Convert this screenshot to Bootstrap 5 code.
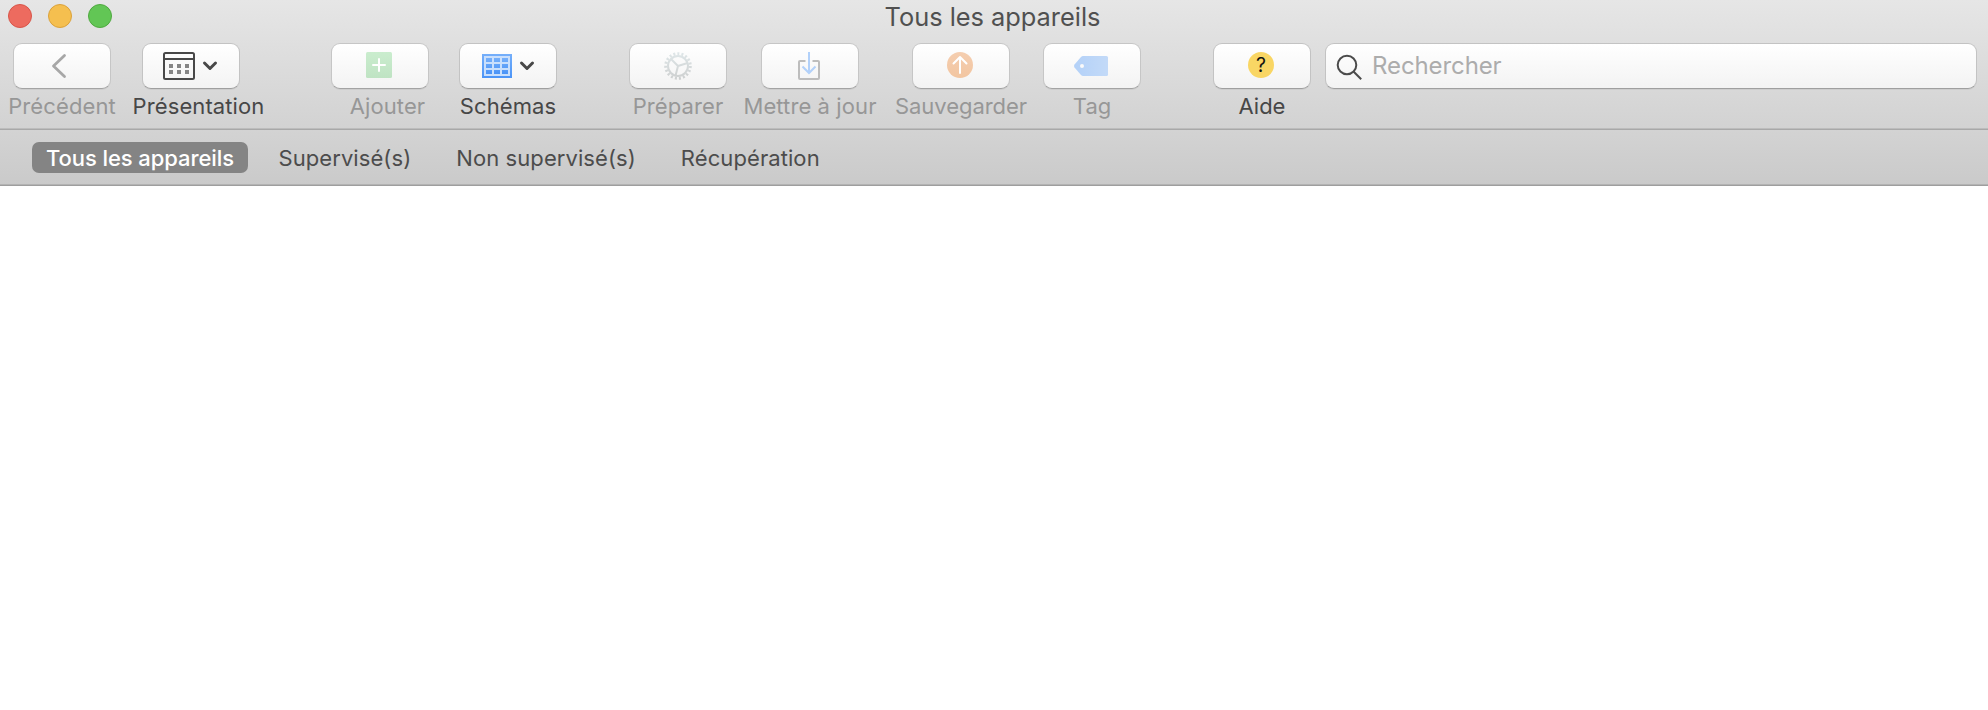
<!DOCTYPE html>
<html lang="fr">
<head>
<meta charset="utf-8">
<title>Tous les appareils</title>
<link href="https://cdn.jsdelivr.net/npm/bootstrap@5.3.0/dist/css/bootstrap.min.css" rel="stylesheet">
<script src="https://cdn.jsdelivr.net/npm/bootstrap@5.3.0/dist/js/bootstrap.bundle.min.js" defer></script>
<style>
body { font-family: Inter, "Liberation Sans", sans-serif; color: #4a4a4a; background: #fff; overflow: hidden; }
.chrome-top { height: 130px; background: linear-gradient(#e6e6e6, #d2d2d2); border-bottom: 1px solid #a8a8a8; box-shadow: inset 0 -1px #bcbcbc; }
.titlebar { height: 34px; }
.win-title { font-size: 25.4px; line-height: 34px; letter-spacing: -.02px; color: #505050; padding-right: 3px; }
.lights { left: 8px; top: 4px; gap: 16px; }
.light { width: 24px; height: 24px; border-radius: 50%; border: 1px solid; }
.light-close { background: #ed6b5f; border-color: #d85549; }
.light-min { background: #f5bf4f; border-color: #dba23b; }
.light-max { background: #62c655; border-color: #4fa93f; }
.tools { padding: 9px 11px 0 13px; }
.tool { width: 98px; flex: none; }
.face { height: 46px; width: 98px; padding: 0; border: 1px solid #c3c3c3; border-bottom-color: #9f9f9f; border-radius: 9px; background: linear-gradient(#fff, #f3f3f3); box-shadow: 0 1px 0 rgba(0,0,0,.05); display: block; }
.face svg { display: block; }
.face:disabled { opacity: 1; border-color: #c6c6c6; border-bottom-color: #a3a3a3; }
.caption { font-size: 22px; line-height: 28px; margin-top: 3px; white-space: nowrap; color: #474747; letter-spacing: .1px; }
.off { color: #979797; }
.snug { letter-spacing: -.04px; }
.shifted { margin-left: 15px; }
.g-view { margin-left: 31px; } .g-add { margin-left: 91px; } .g-plan { margin-left: 30px; }
.g-prep { margin-left: 72px; } .g-upd { margin-left: 34px; } .g-save { margin-left: 53px; }
.g-tag { margin-left: 33px; } .g-help { margin-left: 72px; } .g-find { margin-left: 14px; }
.find { width: auto; }
.find input { font-size: 24px; line-height: 44px; letter-spacing: -.1px; color: #444; }
.find input::placeholder { color: #acacac; opacity: 1; }
.scopes { height: 56px; padding: 12px 32px; background: linear-gradient(#d3d3d3, #cacaca); border-bottom: 1px solid #9e9e9e; box-shadow: inset 0 -1px #b3b3b3; }
.scope { font-size: 22px; line-height: 32px; padding: 0 14.5px; border-radius: 7px; color: #4c4c4c; white-space: nowrap; letter-spacing: .08px; }
.scope.active { background: #848484; color: #fff; font-weight: 500; padding: 0 14px; letter-spacing: -.08px; }
</style>
</head>
<body>
<header class="chrome-top">
  <div class="titlebar position-relative text-center">
    <div class="lights position-absolute d-flex">
      <span class="light light-close"></span><span class="light light-min"></span><span class="light light-max"></span>
    </div>
    <span class="win-title">Tous les appareils</span>
  </div>
  <div class="tools d-flex align-items-start">
    <div class="tool d-flex flex-column align-items-center">
      <button class="face btn" disabled><svg width="96" height="44"><path d="M50.500 11.500 39.500 22 50.500 32.500" fill="none" stroke="#a7a7a7" stroke-width="2.800" stroke-linecap="round" stroke-linejoin="round"/></svg></button>
      <span class="caption off">Précédent</span>
    </div>
    <div class="tool g-view d-flex flex-column align-items-center">
      <button class="face btn"><svg width="96" height="44"><g fill="none" stroke="#484848" stroke-width="2"><rect x="21" y="9" width="30" height="26" rx="1.500"/><path d="M21 15h30"/></g><path d="M26 20h4v4h-4zm8 0h4v4h-4zm8 0h4v4h-4zm-16 6h4v4h-4zm8 0h4v4h-4zm8 0h4v4h-4z" fill="#858585"/><path d="m61.500 19 5.500 5.500 5.500-5.500" fill="none" stroke="#484848" stroke-width="3" stroke-linecap="round" stroke-linejoin="round"/></svg></button>
      <span class="caption shifted">Présentation</span>
    </div>
    <div class="tool g-add d-flex flex-column align-items-center">
      <button class="face btn" disabled><svg width="96" height="44"><defs><linearGradient id="gg" x2="0" y2="1"><stop stop-color="#caedce"/><stop offset="1" stop-color="#bfe3c3"/></linearGradient></defs><rect x="34" y="8" width="26" height="26" rx="1.500" fill="url(#gg)"/><path d="M47 15v12M41 21h12" stroke="#fff" stroke-width="2" stroke-linecap="round"/></svg></button>
      <span class="caption off shifted">Ajouter</span>
    </div>
    <div class="tool g-plan d-flex flex-column align-items-center">
      <button class="face btn"><svg width="96" height="44"><defs><linearGradient id="gb" x2="0" y2="1"><stop stop-color="#75affa"/><stop offset="1" stop-color="#4b94f7"/></linearGradient></defs><rect x="22" y="10" width="30" height="24" fill="url(#gb)"/><rect x="24" y="12" width="26" height="20" fill="#c9dffc"/><path d="M26 14h6v4h-6zm8 0h6v4h-6zm8 0h6v4h-6zM26 20h6v4h-6zm8 0h6v4h-6zm8 0h6v4h-6zM26 26h6v4h-6zm8 0h6v4h-6zm8 0h6v4h-6z" fill="url(#gb)"/><path d="m61.500 19 5.500 5.500 5.500-5.500" fill="none" stroke="#484848" stroke-width="3" stroke-linecap="round" stroke-linejoin="round"/></svg></button>
      <span class="caption">Schémas</span>
    </div>
    <div class="tool g-prep d-flex flex-column align-items-center">
      <button class="face btn" disabled><svg width="96" height="44"><defs><linearGradient id="gs" gradientUnits="userSpaceOnUse" x1="0" x2="0" y1="8" y2="36"><stop stop-color="#dfe7e9"/><stop offset="1" stop-color="#cdcfcf"/></linearGradient></defs><g fill="none" stroke="url(#gs)"><circle cx="48" cy="22" r="10" stroke-width="2"/><circle cx="48" cy="22" r="12.300" stroke-width="3" stroke-dasharray="2 2.068"/><path d="m48 22 9.500-3M48 22l-7-7M48 22l-2.500 9.700" stroke-width="2"/></g></svg></button>
      <span class="caption off">Préparer</span>
    </div>
    <div class="tool g-upd d-flex flex-column align-items-center">
      <button class="face btn" disabled><svg width="96" height="44"><path d="M43.500 17H38q-1 0-1 1v16q0 1 1 1h18q1 0 1-1V18q0-1-1-1h-5.500" fill="none" stroke="#bdbdbd" stroke-width="2"/><path d="M47 8v21M40.500 22.500 47 29l6.500-6.500" fill="none" stroke="#b2d1fa" stroke-width="2"/></svg></button>
      <span class="caption off">Mettre à jour</span>
    </div>
    <div class="tool g-save d-flex flex-column align-items-center">
      <button class="face btn" disabled><svg width="96" height="44"><defs><linearGradient id="go" x2="0" y2="1"><stop stop-color="#f5ceb0"/><stop offset="1" stop-color="#f2c5a0"/></linearGradient></defs><circle cx="47" cy="21" r="13" fill="url(#go)"/><path d="M47 29V13M40.500 19.500 47 13l6.500 6.500" fill="none" stroke="#fff" stroke-width="2" stroke-linecap="round" stroke-linejoin="round"/></svg></button>
      <span class="caption off snug">Sauvegarder</span>
    </div>
    <div class="tool g-tag d-flex flex-column align-items-center">
      <button class="face btn" disabled><svg width="96" height="44"><defs><linearGradient id="gt"><stop stop-color="#b3d1f8"/><stop offset="1" stop-color="#c3daf8"/></linearGradient></defs><path d="M39 12h23.500q1.500 0 1.500 1.500v17q0 1.500-1.500 1.500H39q-1 0-2-1l-6.500-7.500q-1-1.500 0-3L37 13q1-1 2-1z" fill="url(#gt)"/><circle cx="38" cy="22" r="2" fill="#fafafa"/></svg></button>
      <span class="caption off snug">Tag</span>
    </div>
    <div class="tool g-help d-flex flex-column align-items-center">
      <button class="face btn"><svg width="96" height="44"><circle cx="47" cy="21" r="13" fill="#f9d664"/><text x="47" y="28" text-anchor="middle" font-family="Inter, sans-serif" font-size="19.500" font-weight="400" fill="#111">?</text></svg></button>
      <span class="caption snug">Aide</span>
    </div>
    <label class="face find g-find flex-grow-1"><span class="d-flex align-items-center">
      <svg class="flex-shrink-0" width="46" height="44"><g fill="none" stroke="#4b4b4b" stroke-width="2"><circle cx="21" cy="21" r="9.300"/><path d="m27.500 27.500 7.700 7.700"/></g></svg>
      <input class="border-0 bg-transparent p-0 flex-grow-1" type="text" placeholder="Rechercher" aria-label="Rechercher">
    </span></label>
  </div>
</header>
<nav class="scopes d-flex">
  <a class="scope active text-decoration-none">Tous les appareils</a>
  <a class="scope text-decoration-none ms-3">Supervisé(s)</a>
  <a class="scope text-decoration-none ms-3">Non supervisé(s)</a>
  <a class="scope text-decoration-none ms-3">Récupération</a>
</nav>
<main></main>
</body>
</html>
